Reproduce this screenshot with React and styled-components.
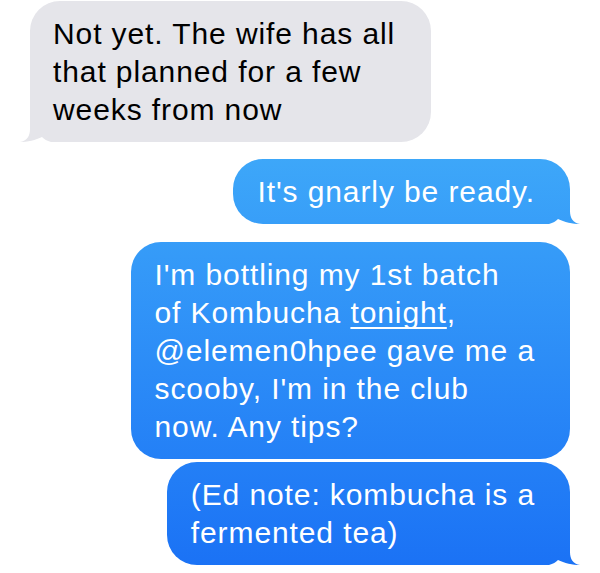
import styled, { createGlobalStyle } from 'styled-components'

const GlobalStyle = createGlobalStyle`
    body {
        margin: 0;
        background: #ffffff;
        font-family: "Liberation Sans", Helvetica, Arial, sans-serif;
    }
`

const blueFill = 'linear-gradient(180deg, #3ea8f9 0px, #3ea8f9 150px, #1a71f5 573px) fixed'

const Thread = styled.div`
    display: flex;
    flex-direction: column;
    padding: 1px 30px 0 30px;
`

const Bubble = styled.div`
    position: relative;
    isolation: isolate;
    align-self: ${(props) => (props.$mine ? 'flex-end' : 'flex-start')};
    margin-top: ${(props) => props.$gap}px;
    padding: ${(props) => (props.$mine ? '14px 35px 13px 24px' : '14px 36px 13px 23px')};
    border-radius: 30px;
    background: ${(props) => (props.$mine ? blueFill : '#e5e5ea')};
    color: ${(props) => (props.$mine ? '#ffffff' : '#000000')};
    font-size: 30px;
    line-height: 38px;
    letter-spacing: 0.9px;
    white-space: nowrap;

    &::after {
        content: "";
        display: ${(props) => (props.$tail ? 'block' : 'none')};
        position: absolute;
        z-index: -1;
        bottom: 0;
        width: 44px;
        height: 32px;
        background: inherit;
        ${(props) =>
            props.$mine
                ? `right: -11px;
                   clip-path: path("M 1 2 L 33 2 L 33 19 C 33 26 36 31 43 32 C 36 32 27 30 21 27 C 19 29 16 31 12 32 L 1 32 Z");`
                : `left: -11px;
                   clip-path: path("M 43 2 L 11 2 L 11 19 C 11 26 8 31 1 32 C 8 32 17 30 23 27 C 25 29 28 31 32 32 L 43 32 Z");`}
    }
`

const Link = styled.span`
    text-decoration: underline;
    text-decoration-thickness: 1.5px;
    text-underline-offset: 4px;
    text-decoration-skip-ink: none;
`

const messages = [
    {
        mine: false,
        gap: 0,
        tail: true,
        lines: ['Not yet. The wife has all', 'that planned for a few', 'weeks from now'],
    },
    { mine: true, gap: 17, tail: true, lines: ["It's gnarly be ready."] },
    {
        mine: true,
        gap: 18,
        tail: false,
        lines: [
            "I'm bottling my 1st batch",
            <>of Kombucha <Link>tonight</Link>,</>,
            '@elemen0hpee gave me a',
            "scooby, I'm in the club",
            'now. Any tips?',
        ],
    },
    {
        mine: true,
        gap: 3,
        tail: true,
        lines: ['(Ed note: kombucha is a', 'fermented tea)'],
    },
]

function App() {
    return (
        <>
            <GlobalStyle />
            <Thread>
                {messages.map((m, i) => (
                    <Bubble key={i} $mine={m.mine} $gap={m.gap} $tail={m.tail}>
                        {m.lines.map((line, j) => (
                            <span key={j}>
                                {j > 0 && <br />}
                                {line}
                            </span>
                        ))}
                    </Bubble>
                ))}
            </Thread>
        </>
    )
}

export default App
